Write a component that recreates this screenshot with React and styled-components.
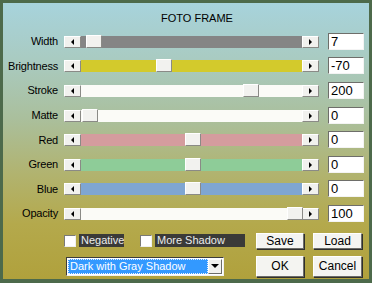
import React from 'react';
import styled, { createGlobalStyle } from 'styled-components';

const Global = createGlobalStyle`
  html, body { margin: 0; padding: 0; }
  body { font-family: "Liberation Sans", Arial, sans-serif; }
`;

const Frame = styled.div`
  width: 372px;
  height: 283px;
  box-sizing: border-box;
  border: 3px solid #4d6a4b;
  border-bottom-width: 4px;
  background: linear-gradient(180deg, #a7d3dc 0%, #a9cbc2 20%, #aabf9c 42%, #b1b36f 62%, #b4a94c 80%, #b0a13c 100%);
  padding-top: 8px;
  display: flex;
  flex-direction: column;
`;

const Title = styled.div`
  font-size: 11px;
  line-height: 14px;
  color: #000;
  text-align: center;
  padding-left: 22px;
  margin-bottom: 4px;
`;

const Rows = styled.div`
  display: flex;
  flex-direction: column;
`;

const Row = styled.div`
  display: flex;
  align-items: center;
  height: 24.6px;
`;

const Label = styled.div`
  width: 55px;
  margin-right: 6px;
  text-align: right;
  font-size: 11px;
  color: #000;
  letter-spacing: -0.2px;
`;

const SliderBox = styled.div`
  display: flex;
  width: 255px;
  height: 12px;
  margin-top: 1px;
`;

const ArrowBtn = styled.div`
  width: 17px;
  height: 12px;
  box-sizing: border-box;
  background: #f1f1ee;
  border: 1px solid;
  border-color: #ffffff #8a8a86 #8a8a86 #ffffff;
  display: flex;
  align-items: center;
  justify-content: center;
  flex: none;
`;

const Tri = styled.div`
  width: 0;
  height: 0;
  border-top: 3px solid transparent;
  border-bottom: 3px solid transparent;
  ${p => (p.$dir === 'left' ? 'border-right: 3px solid #000;' : 'border-left: 3px solid #000;')}
`;

const Track = styled.div`
  position: relative;
  flex: 1;
  background: ${p => p.$color};
`;

const Thumb = styled.div`
  position: absolute;
  top: -1px;
  width: 16px;
  height: 13px;
  box-sizing: border-box;
  background: #f2f2ef;
  border: 1px solid;
  border-color: #ffffff #8a8a86 #8a8a86 #ffffff;
`;

const ValueBox = styled.div`
  width: 36px;
  height: 17px;
  box-sizing: border-box;
  margin-left: 9px;
  background: #fff;
  border: 1px solid;
  border-color: #6e6e6a #f4f4f4 #f4f4f4 #6e6e6a;
  font-family: "Liberation Sans Narrow", "Liberation Sans", Arial, sans-serif;
  font-size: 13px;
  line-height: 15px;
  padding-left: 2px;
  color: #000;
`;

const Bottom = styled.div`
  display: grid;
  grid-template-columns: 183px 48px 49px;
  column-gap: 9px;
  row-gap: 7px;
  margin-left: 61px;
  margin-top: 7px;
  align-items: center;
`;

const Checks = styled.div`
  display: flex;
  align-items: center;
`;

const CheckItem = styled.div`
  display: flex;
  align-items: center;
  margin-right: ${p => p.$mr || 0}px;
`;

const Box = styled.div`
  width: 12px;
  height: 12px;
  box-sizing: border-box;
  background: #fff;
  border: 1px solid;
  border-color: #7a7a76 #f0f0f0 #f0f0f0 #7a7a76;
  margin-right: 3px;
`;

const CheckLabel = styled.div`
  background: #3a3a38;
  color: #ececec;
  font-size: 11px;
  line-height: 13px;
  padding: 0 1px 0 2px;
  width: ${p => p.$w}px;
  box-sizing: border-box;
  white-space: nowrap;
`;

const Button = styled.div`
  height: ${p => p.$h}px;
  box-sizing: border-box;
  background: #f4f4f1;
  border: 1px solid;
  border-color: #ffffff #6c6c68 #6c6c68 #ffffff;
  box-shadow: 1px 1px 0 #2f2f2d;
  display: flex;
  align-items: center;
  justify-content: center;
  font-size: 12px;
  color: #000;
`;

const Select = styled.div`
  width: 158px;
  height: 19px;
  box-sizing: border-box;
  border: 1px solid;
  border-color: #3c3c3a #f0f0f0 #f0f0f0 #3c3c3a;
  background: #fff;
  display: flex;
  align-items: stretch;
  padding: 1px;
  margin-left: 2px;
`;

const SelectText = styled.div`
  flex: 1;
  background: #3399ff;
  color: #fff;
  font-size: 11px;
  line-height: 15px;
  padding-left: 2px;
  outline: 1px dotted #e8f0ff;
  outline-offset: -1px;
  white-space: nowrap;
  overflow: hidden;
`;

const SelectBtn = styled.div`
  width: 14px;
  box-sizing: border-box;
  background: #f1f1ee;
  border: 1px solid;
  border-color: #ffffff #6c6c68 #6c6c68 #ffffff;
  display: flex;
  align-items: center;
  justify-content: center;
`;

const DownTri = styled.div`
  width: 0;
  height: 0;
  border-left: 4px solid transparent;
  border-right: 4px solid transparent;
  border-top: 4px solid #000;
`;

const sliders = [
  { label: 'Width', value: 7, min: 0, max: 360, color: '#858585' },
  { label: 'Brightness', value: -70, min: -255, max: 255, color: '#d3ca2c' },
  { label: 'Stroke', value: 200, min: 0, max: 255, color: '#fbfbf7' },
  { label: 'Matte', value: 0, min: 0, max: 255, color: '#fbfbf7' },
  { label: 'Red', value: 0, min: -255, max: 255, color: '#d49c9e' },
  { label: 'Green', value: 0, min: -255, max: 255, color: '#8ecc98' },
  { label: 'Blue', value: 0, min: -255, max: 255, color: '#7fa6d2' },
  { label: 'Opacity', value: 100, min: 0, max: 100, color: '#fbfbf7' },
];

const TRAVEL = 205;

export default function App() {
  return (
    <>
      <Global />
      <Frame>
        <Title>FOTO FRAME</Title>
        <Rows>
          {sliders.map(s => {
            const left = Math.round(((s.value - s.min) / (s.max - s.min)) * TRAVEL) + 1;
            return (
              <Row key={s.label}>
                <Label>{s.label}</Label>
                <SliderBox>
                  <ArrowBtn><Tri $dir="left" /></ArrowBtn>
                  <Track $color={s.color}>
                    <Thumb style={{ left }} />
                  </Track>
                  <ArrowBtn><Tri $dir="right" /></ArrowBtn>
                </SliderBox>
                <ValueBox>{s.value}</ValueBox>
              </Row>
            );
          })}
        </Rows>
        <Bottom>
          <Checks>
            <CheckItem $mr={16}>
              <Box />
              <CheckLabel $w={45}>Negative</CheckLabel>
            </CheckItem>
            <CheckItem>
              <Box />
              <CheckLabel $w={90}>More Shadow</CheckLabel>
            </CheckItem>
          </Checks>
          <Button $h={16}>Save</Button>
          <Button $h={16}>Load</Button>
          <Select>
            <SelectText>Dark with Gray Shadow</SelectText>
            <SelectBtn><DownTri /></SelectBtn>
          </Select>
          <Button $h={21}>OK</Button>
          <Button $h={21}>Cancel</Button>
        </Bottom>
      </Frame>
    </>
  );
}
